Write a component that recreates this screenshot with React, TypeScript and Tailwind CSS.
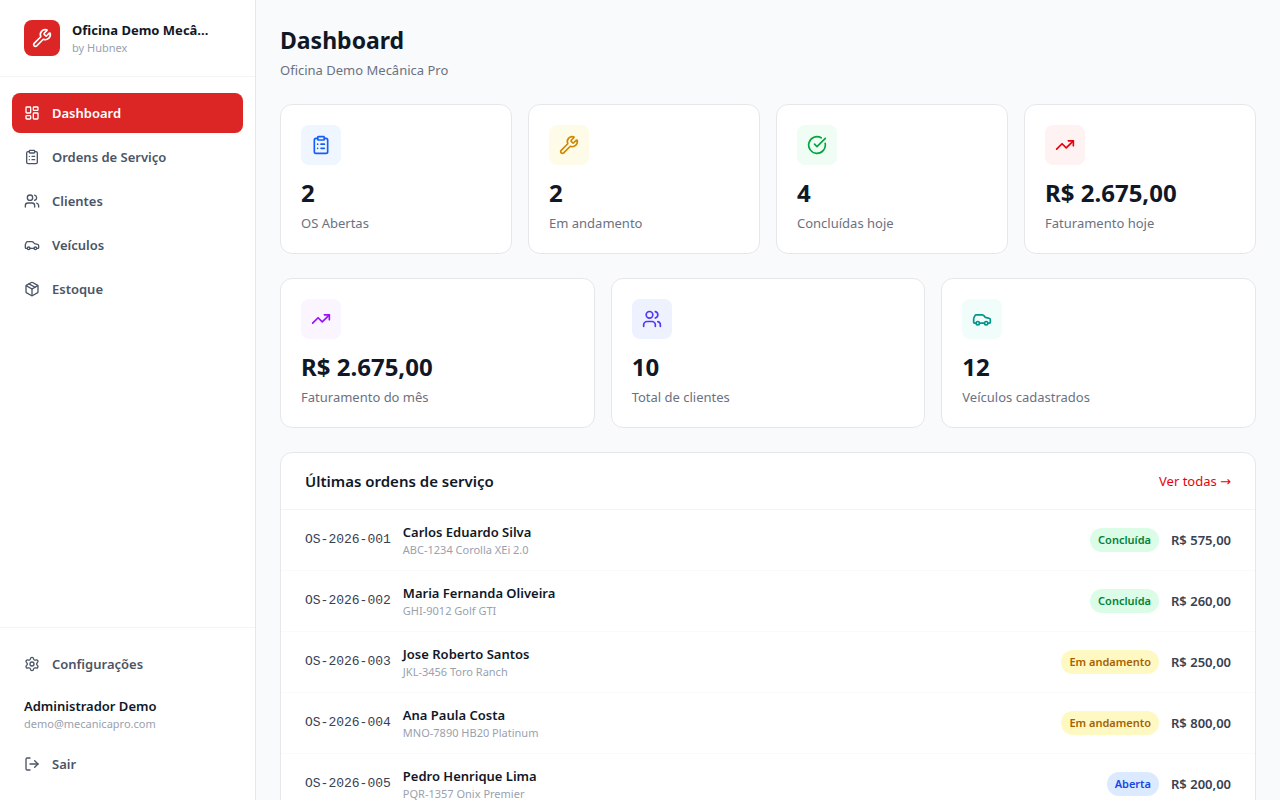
import {
  Car,
  CircleCheckBig,
  ClipboardList,
  LayoutDashboard,
  LogOut,
  Package,
  Settings,
  TrendingUp,
  Users,
  Wrench,
  type LucideIcon,
} from "lucide-react";

type OrderStatus = "aberta" | "em_andamento" | "concluida";

const companyName = "Oficina Demo Mecânica Pro";

const navItems: { label: string; href: string; icon: LucideIcon }[] = [
  { label: "Dashboard", href: "#dashboard", icon: LayoutDashboard },
  { label: "Ordens de Serviço", href: "#ordens", icon: ClipboardList },
  { label: "Clientes", href: "#clientes", icon: Users },
  { label: "Veículos", href: "#veiculos", icon: Car },
  { label: "Estoque", href: "#estoque", icon: Package },
];

const todayStats = [
  { label: "OS Abertas", value: "2", icon: ClipboardList, tone: "bg-blue-50 text-blue-600" },
  { label: "Em andamento", value: "2", icon: Wrench, tone: "bg-yellow-50 text-yellow-600" },
  { label: "Concluídas hoje", value: "4", icon: CircleCheckBig, tone: "bg-green-50 text-green-600" },
  { label: "Faturamento hoje", value: "R$ 2.675,00", icon: TrendingUp, tone: "bg-red-50 text-red-600" },
];

const totalStats = [
  { label: "Faturamento do mês", value: "R$ 2.675,00", icon: TrendingUp, tone: "bg-purple-50 text-purple-600" },
  { label: "Total de clientes", value: "10", icon: Users, tone: "bg-indigo-50 text-indigo-600" },
  { label: "Veículos cadastrados", value: "12", icon: Car, tone: "bg-teal-50 text-teal-600" },
];

const statusConfig: Record<OrderStatus, { label: string; className: string }> = {
  aberta: { label: "Aberta", className: "bg-blue-100 text-blue-700" },
  em_andamento: { label: "Em andamento", className: "bg-yellow-100 text-yellow-700" },
  concluida: { label: "Concluída", className: "bg-green-100 text-green-700" },
};

const orders: { number: string; client: string; vehicle: string; status: OrderStatus; total: string }[] = [
  { number: "OS-2026-001", client: "Carlos Eduardo Silva", vehicle: "ABC-1234 Corolla XEi 2.0", status: "concluida", total: "R$ 575,00" },
  { number: "OS-2026-002", client: "Maria Fernanda Oliveira", vehicle: "GHI-9012 Golf GTI", status: "concluida", total: "R$ 260,00" },
  { number: "OS-2026-003", client: "Jose Roberto Santos", vehicle: "JKL-3456 Toro Ranch", status: "em_andamento", total: "R$ 250,00" },
  { number: "OS-2026-004", client: "Ana Paula Costa", vehicle: "MNO-7890 HB20 Platinum", status: "em_andamento", total: "R$ 800,00" },
  { number: "OS-2026-005", client: "Pedro Henrique Lima", vehicle: "PQR-1357 Onix Premier", status: "aberta", total: "R$ 200,00" },
];

function shorten(text: string, max: number) {
  return text.length > max ? `${text.slice(0, max)}...` : text;
}

function NavLink({ label, href, icon: Icon, active }: { label: string; href: string; icon: LucideIcon; active?: boolean }) {
  return (
    <a
      href={href}
      className={`flex items-center gap-3 rounded-lg px-3 py-[10px] text-[13px] leading-5 font-semibold ${
        active ? "bg-[#dc2626] text-white" : "text-gray-600 hover:bg-gray-100"
      }`}
    >
      <Icon size={16} className="shrink-0" />
      {label}
    </a>
  );
}

function Sidebar() {
  return (
    <aside className="flex w-64 shrink-0 flex-col border-r border-gray-200 bg-white">
      <div className="flex items-center gap-3 border-b border-gray-100 px-6 py-5">
        <div className="flex h-9 w-9 shrink-0 items-center justify-center rounded-lg bg-[#dc2626] text-white">
          <Wrench size={20} />
        </div>
        <div className="min-w-0 flex-1">
          <p className="text-[13px] leading-5 font-bold text-gray-900" title={companyName}>
            {shorten(companyName, 17)}
          </p>
          <p className="text-[11px] leading-4 text-gray-400">by Hubnex</p>
        </div>
      </div>

      <nav className="flex-1 space-y-1 px-3 py-4">
        {navItems.map((item, index) => (
          <NavLink key={item.href} {...item} active={index === 0} />
        ))}
      </nav>

      <div className="space-y-1 border-t border-gray-100 px-3 py-4">
        <NavLink label="Configurações" href="#configuracoes" icon={Settings} />
        <div className="px-3 py-2">
          <p className="text-[13px] leading-5 font-semibold text-gray-900">Administrador Demo</p>
          <p className="text-[11px] leading-4 text-gray-400">demo@mecanicapro.com</p>
        </div>
        <button
          type="button"
          className="flex w-full items-center gap-3 rounded-lg px-3 py-[10px] text-[13px] leading-5 font-semibold text-gray-600 hover:bg-gray-100"
        >
          <LogOut size={16} />
          Sair
        </button>
      </div>
    </aside>
  );
}

function StatCard({ label, value, icon: Icon, tone }: { label: string; value: string; icon: LucideIcon; tone: string }) {
  return (
    <div className="rounded-xl border border-gray-200 bg-white p-5">
      <div className={`mb-3 flex h-10 w-10 items-center justify-center rounded-lg ${tone}`}>
        <Icon size={20} />
      </div>
      <p className="text-2xl font-bold text-gray-900">{value}</p>
      <p className="mt-1 text-[13px] leading-5 text-gray-500">{label}</p>
    </div>
  );
}

export default function App() {
  return (
    <div className="flex h-screen overflow-hidden bg-gray-50 font-['Segoe_UI','Noto_Sans',sans-serif]">
      <Sidebar />

      <main className="min-w-0 flex-1 overflow-y-auto p-6">
        <div className="mb-6">
          <h1 className="text-[23px] leading-8 font-bold text-gray-900">Dashboard</h1>
          <p className="mt-1 text-[13px] leading-5 text-gray-500">{companyName}</p>
        </div>

        <div className="mb-6 grid grid-cols-2 gap-4 lg:grid-cols-4">
          {todayStats.map((stat) => (
            <StatCard key={stat.label} {...stat} />
          ))}
        </div>

        <div className="mb-6 grid grid-cols-1 gap-4 md:grid-cols-3">
          {totalStats.map((stat) => (
            <StatCard key={stat.label} {...stat} />
          ))}
        </div>

        <section className="rounded-xl border border-gray-200 bg-white">
          <div className="flex items-center justify-between border-b border-gray-100 px-6 py-4">
            <h2 className="text-[15px] leading-6 font-semibold text-gray-900">Últimas ordens de serviço</h2>
            <a href="#ordens" className="text-[13px] leading-5 text-red-600 hover:underline">
              Ver todas <span className="font-['DejaVu_Sans',sans-serif]">→</span>
            </a>
          </div>
          <ul className="divide-y divide-gray-50">
            {orders.map((order) => {
              const status = statusConfig[order.status];

              return (
                <li key={order.number}>
                  <a href={`#${order.number}`} className="flex items-center justify-between px-6 py-3 hover:bg-gray-50">
                    <div className="flex items-center gap-3">
                      <span className="font-['Liberation_Mono',monospace] text-[13px] leading-5 text-gray-700">
                        {order.number}
                      </span>
                      <div>
                        <p className="text-[13px] leading-5 font-semibold text-gray-900">{order.client}</p>
                        <p className="text-[11px] leading-4 text-gray-400">{order.vehicle}</p>
                      </div>
                    </div>
                    <div className="flex items-center gap-3">
                      <span className={`rounded-full px-2 py-1 text-[11px] leading-4 font-semibold ${status.className}`}>
                        {status.label}
                      </span>
                      <span className="text-[13px] leading-5 font-semibold text-gray-700">{order.total}</span>
                    </div>
                  </a>
                </li>
              );
            })}
          </ul>
        </section>
      </main>
    </div>
  );
}
